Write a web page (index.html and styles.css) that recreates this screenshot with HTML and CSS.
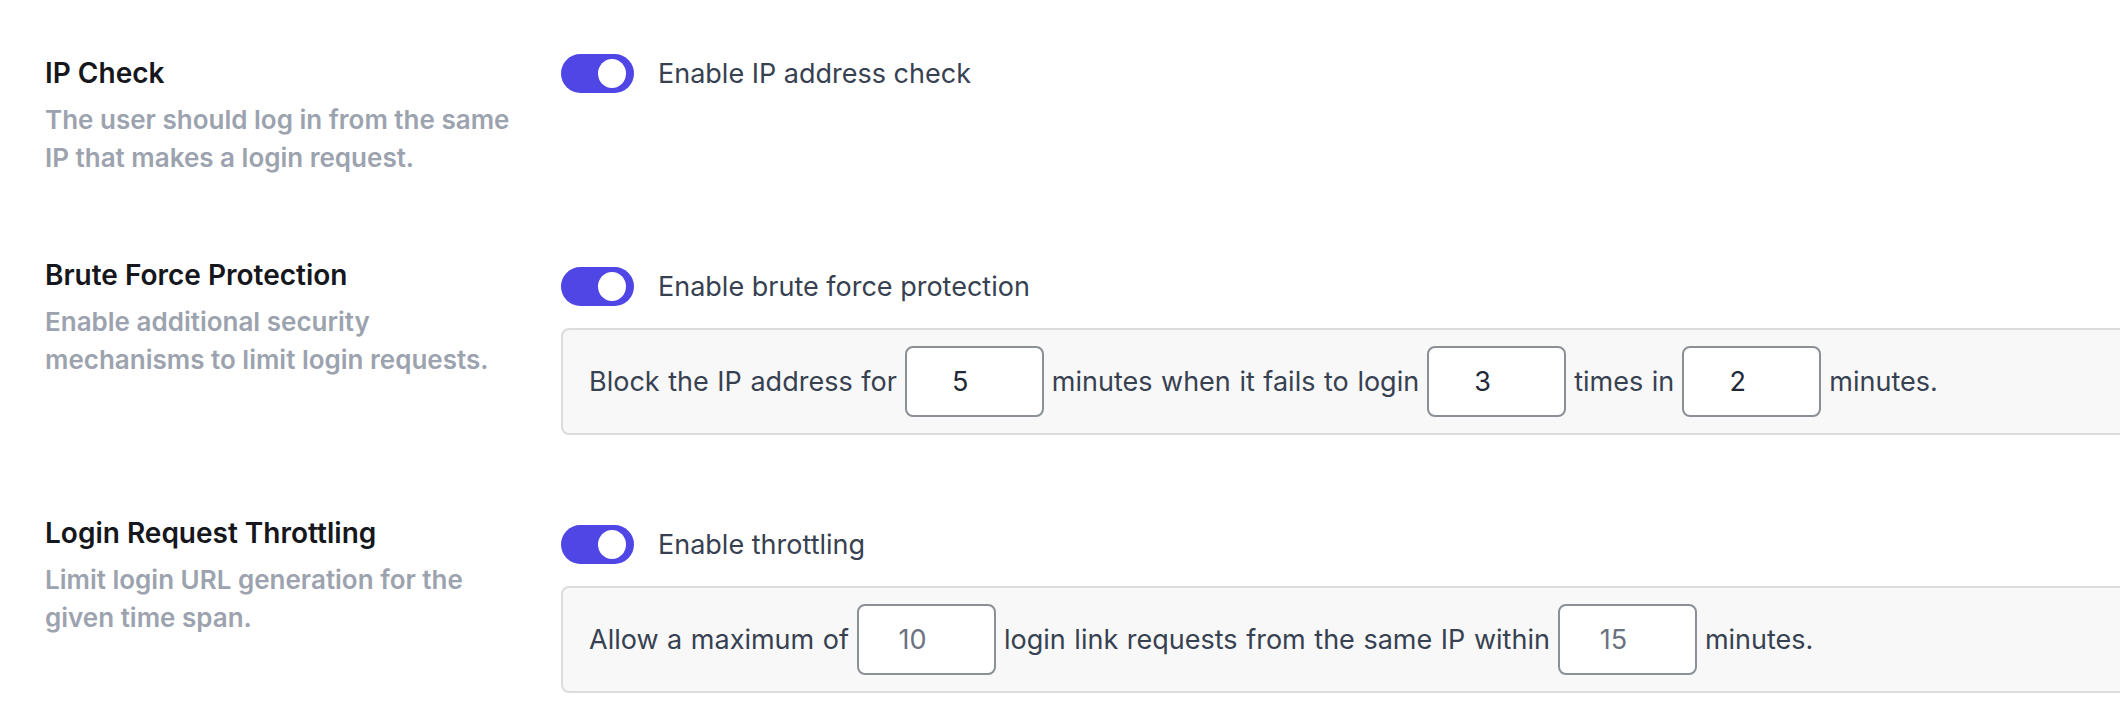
FILE: index.html
```html
<!DOCTYPE html>
<html lang="en">
	<head>
		<meta charset="utf-8">
		<title>Login Security Settings</title>
		<link rel="stylesheet" href="styles.css">
	</head>
	<body>
		<div class="settings">

			<!-- IP check -->
			<section class="setting setting-single">
				<div class="setting-info">
					<h3>IP Check</h3>
					<p>The user should log in from the same IP that makes a login request.</p>
				</div>
				<div class="setting-body">
					<label class="switch-row">
						<span class="switch on"><span class="knob"></span></span>
						<span>Enable IP address check</span>
					</label>
				</div>
			</section>

			<!-- Brute force -->
			<section class="setting">
				<div class="setting-info">
					<h3>Brute Force Protection</h3>
					<p>Enable additional security mechanisms to limit login requests.</p>
				</div>
				<div class="setting-body">
					<label class="switch-row">
						<span class="switch on"><span class="knob"></span></span>
						<span>Enable brute force protection</span>
					</label>
					<div class="rule-box">
						<span>Block the IP address for</span>
						<input class="num" type="text" value="5">
						<span>minutes when it fails to login</span>
						<input class="num" type="text" value="3">
						<span>times in</span>
						<input class="num" type="text" value="2">
						<span>minutes.</span>
					</div>
				</div>
			</section>

			<!-- Throttling -->
			<section class="setting">
				<div class="setting-info">
					<h3>Login Request Throttling</h3>
					<p>Limit login URL generation for the given time span.</p>
				</div>
				<div class="setting-body">
					<label class="switch-row">
						<span class="switch on"><span class="knob"></span></span>
						<span>Enable throttling</span>
					</label>
					<div class="rule-box">
						<span>Allow a maximum of</span>
						<input class="num" type="text" placeholder="10">
						<span>login link requests from the same IP within</span>
						<input class="num" type="text" placeholder="15">
						<span>minutes.</span>
					</div>
				</div>
			</section>

		</div>
	</body>
</html>
```

FILE: styles.css
```css
body {
	margin: 0;
	background: #fff;
	font-family: Inter, "Noto Sans", sans-serif;
	overflow: hidden;
}

.settings {
	display: flex;
	flex-direction: column;
	gap: 90px;
	padding: 54px 0 0 45px;
}

.setting {
	display: flex;
	gap: 36px;
	align-items: flex-start;
}

.setting-info {
	flex: none;
	width: 480px;
}

.setting-info h3 {
	margin: -11px 0 0;
	font-size: 28px;
	font-weight: 600;
	line-height: 38px;
	color: #15171c;
}

.setting-single .setting-info h3 {
	margin-top: 0;
}

.setting-info p {
	margin: 9px 0 0;
	font-size: 26px;
	font-weight: 600;
	line-height: 38px;
	color: #9ca3af;
}

.setting-body {
	flex: none;
	width: 1600px;
	display: flex;
	flex-direction: column;
	gap: 22px;
}

.switch-row {
	display: flex;
	align-items: center;
	gap: 24px;
	font-size: 27px;
	color: #374151;
}

.switch {
	position: relative;
	flex: none;
	width: 73px;
	height: 39px;
	border-radius: 20px;
	background: #4f46e5;
}

.switch .knob {
	position: absolute;
	top: 5px;
	right: 8px;
	width: 28px;
	height: 29px;
	border-radius: 50%;
	background: #fff;
}

.rule-box {
	display: flex;
	align-items: center;
	gap: 8px;
	padding: 16px 26px;
	border: 2px solid #dcdcdc;
	border-radius: 8px;
	background: #f8f8f8;
	font-size: 27px;
	word-spacing: 1px;
	color: #374151;
}

.num {
	box-sizing: border-box;
	width: 139px;
	height: 71px;
	padding: 0 28px 0 0;
	border: 2px solid #8b8f96;
	border-radius: 8px;
	background: #fff;
	font-family: inherit;
	font-size: 27px;
	color: #1f2937;
	text-align: center;
}

.num::placeholder {
	color: #6b7280;
}
```
